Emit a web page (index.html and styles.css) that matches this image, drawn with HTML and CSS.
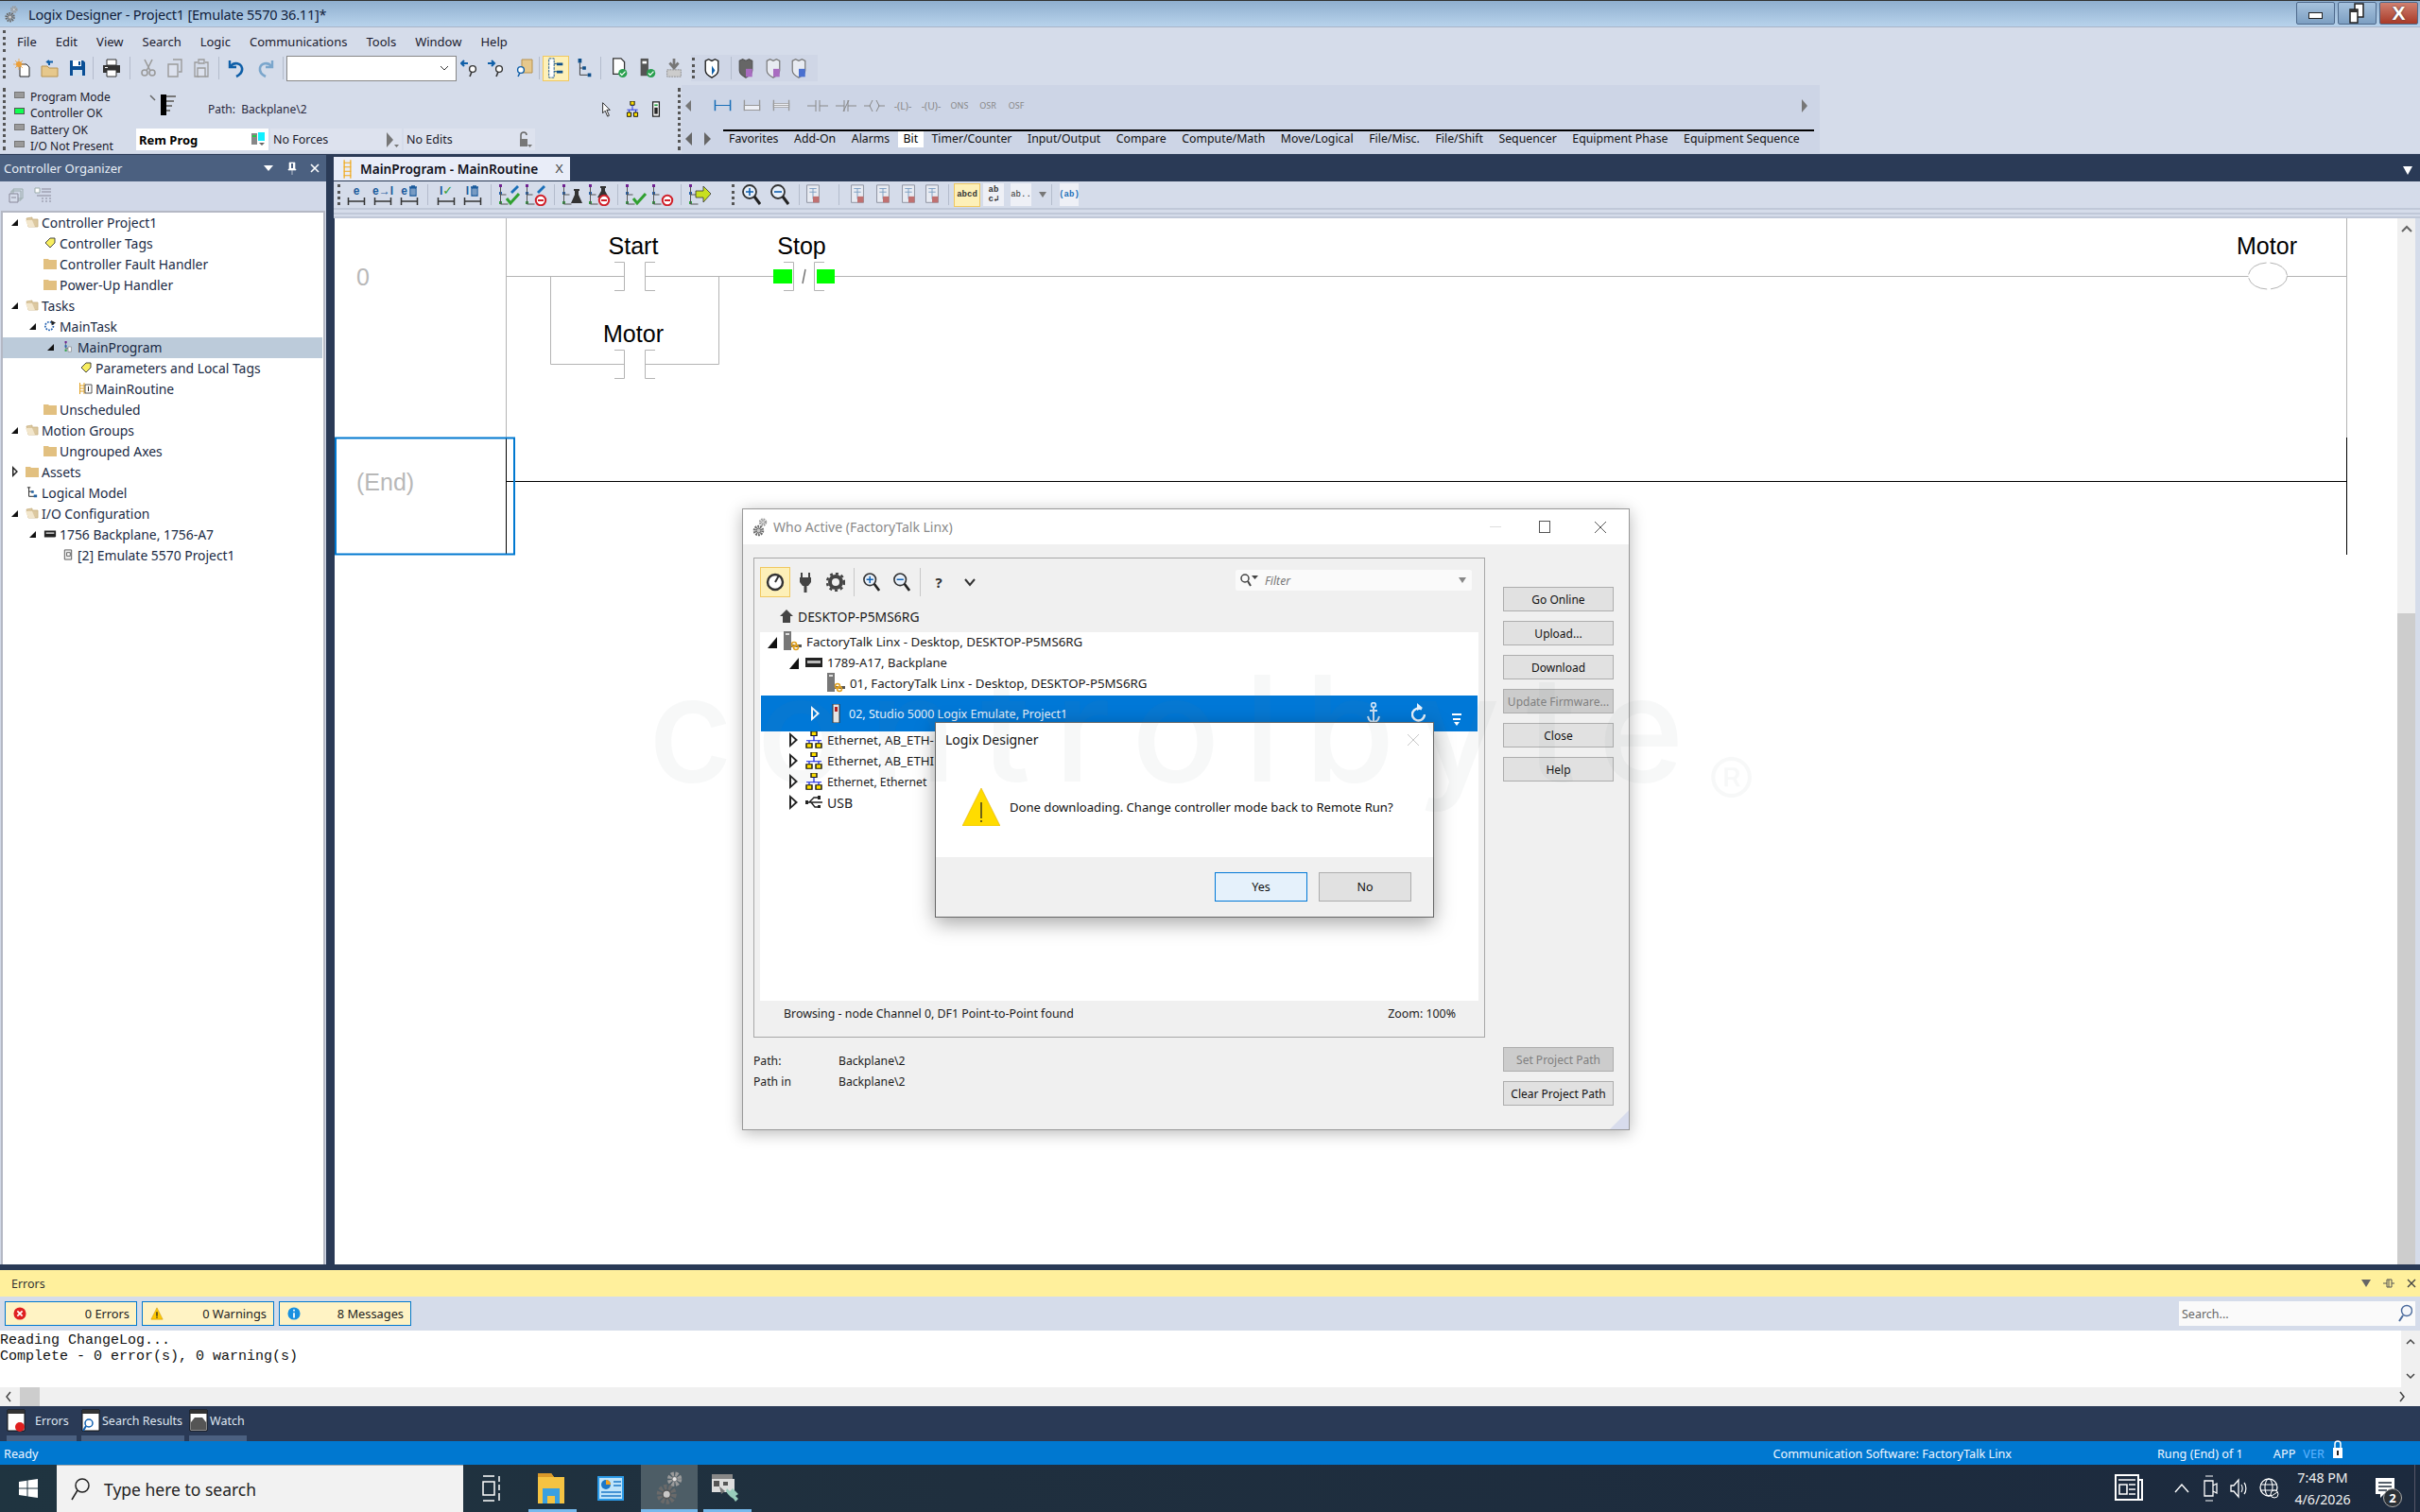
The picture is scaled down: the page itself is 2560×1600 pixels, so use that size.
FILE: index.html
```html
<!DOCTYPE html>
<html lang="en">
<head>
<meta charset="utf-8">
<title>Logix Designer - Project1</title>
<link rel="stylesheet" href="styles.css">
</head>
<body>
<svg class="defs" width="0" height="0" aria-hidden="true">
  <defs>
    <symbol id="gears" viewBox="0 0 20 26"><circle cx="8" cy="17.500" r="5.500" fill="none" stroke="#6a6a6a" stroke-width="4" stroke-dasharray="2.200 1.200"/><circle cx="8" cy="17.500" r="3" fill="#c8c8c8" stroke="#555"/><circle cx="14" cy="6" r="3.800" fill="none" stroke="#9a9a9a" stroke-width="3.400" stroke-dasharray="2 1"/><circle cx="14" cy="6" r="1.800" fill="#e4e4e4" stroke="#777" stroke-width=".6"/></symbol>
    <symbol id="new" viewBox="0 0 20 20"><path d="M7 6h7l3 3v10H7z" fill="#fff" stroke="#222"/><circle cx="6" cy="6" r="3" fill="#f0a030"/><path d="M6 0v12M0 6h12M2 2l8 8M10 2l-8 8" stroke="#e8a040" stroke-width=".8"/></symbol>
    <symbol id="open" viewBox="0 0 20 20"><path d="M1 8h6l2 2h9v9H1z" fill="#e6c88c" stroke="#b8924c"/><path d="M9 7V3.500h4M9 2l-2 1.500L9 5" fill="none" stroke="#0f5fa8" stroke-width="2"/></symbol>
    <symbol id="save" viewBox="0 0 20 20"><path d="M2 2h14l2 2v14H2z" fill="#0a4f96"/><path d="M5 2h9v6H5z" fill="#fff"/><path d="M11 3h2v4h-2z" fill="#0a4f96"/><path d="M5 12h10v6H5z" fill="#cfe0f0"/></symbol>
    <symbol id="print" viewBox="0 0 20 20"><path d="M5 1h10v6H5z" fill="#fff" stroke="#333"/><path d="M1 7h18v8H1z" fill="#333"/><path d="M5 12h10v7H5z" fill="#fff" stroke="#333"/><path d="M3 9h3v1H3z" fill="#fff"/></symbol>
    <symbol id="cut" viewBox="0 0 20 20"><path d="M6 1l6 12M14 1L8 13" stroke="#9a9a9a" stroke-width="1.600" fill="none"/><circle cx="6" cy="15" r="3" fill="none" stroke="#9a9a9a" stroke-width="1.600"/><circle cx="14" cy="15" r="3" fill="none" stroke="#9a9a9a" stroke-width="1.600"/></symbol>
    <symbol id="copy" viewBox="0 0 20 20"><path d="M8 1h9v13h-3" fill="none" stroke="#9a9a9a" stroke-width="1.400"/><path d="M3 6h10v13H3z" fill="#dde2ee" stroke="#9a9a9a" stroke-width="1.400"/></symbol>
    <symbol id="paste" viewBox="0 0 20 20"><path d="M6 4H3v15h5M14 4h3v15h-3" fill="none" stroke="#9a9a9a" stroke-width="1.300"/><path d="M7 1h6v4H7z" fill="none" stroke="#9a9a9a" stroke-width="1.300"/><path d="M6 10h8v9H6z" fill="#dde2ee" stroke="#9a9a9a" stroke-width="1.300"/></symbol>
    <symbol id="undo" viewBox="0 0 20 22"><path d="M3 3v7h7" fill="none" stroke="#0f5fa8" stroke-width="2.400"/><path d="M4 9c4-5 11-3 12 2 .7 4-2 7-6 9" fill="none" stroke="#0f5fa8" stroke-width="2.600"/></symbol>
    <symbol id="redo" viewBox="0 0 20 22"><path d="M17 3v7h-7" fill="none" stroke="#7ba6cc" stroke-width="2.400"/><path d="M16 9c-4-5-11-3-12 2-.7 4 2 7 6 9" fill="none" stroke="#7ba6cc" stroke-width="2.600"/></symbol>
    <symbol id="findb" viewBox="0 0 20 20"><path d="M8 5H2M4 2L1 5l3 3" fill="none" stroke="#0f5fa8" stroke-width="2"/><circle cx="13" cy="11" r="3.400" fill="#fff" stroke="#333" stroke-width="1.400"/><path d="M12 14l-2 5" stroke="#333" stroke-width="1.600"/></symbol>
    <symbol id="findf" viewBox="0 0 20 20"><path d="M1 5h6M5 2l3 3-3 3" fill="none" stroke="#0f5fa8" stroke-width="2"/><circle cx="13" cy="11" r="3.400" fill="#fff" stroke="#333" stroke-width="1.400"/><path d="M12 14l-2 5" stroke="#333" stroke-width="1.600"/></symbol>
    <symbol id="findd" viewBox="0 0 20 20"><path d="M7 1h11v14H7z" fill="#e6c88c" stroke="#b8924c"/><circle cx="6" cy="12" r="3.400" fill="#fff" stroke="#0f5fa8" stroke-width="1.400"/><path d="M5 15l-2 4" stroke="#0f5fa8" stroke-width="1.600"/></symbol>
    <symbol id="org1" viewBox="0 0 20 24"><path d="M2 1h6v22H2z" fill="#fff" stroke="#0f4f8a" stroke-dasharray="3 1"/><path d="M11 6h7v3h-7zM11 15h7v3h-7z" fill="#0f4f8a"/><path d="M8 7h3M8 16h3" stroke="#0f4f8a"/></symbol>
    <symbol id="org2" viewBox="0 0 20 24"><path d="M3 1h4v5H3zM8 10h4v4H8zM14 18h4v4h-4z" fill="#0f4f8a"/><path d="M5 6v14h9M5 12h3" fill="none" stroke="#333"/></symbol>
    <symbol id="doc" viewBox="0 0 20 24"><path d="M2 1h9l4 4v14H2z" fill="#fff" stroke="#333" stroke-width="1.400"/><circle cx="13" cy="18" r="5" fill="#2aa050"/><path d="M10 18l2 2 4-4" fill="none" stroke="#fff" stroke-width="1.400"/></symbol>
    <symbol id="modck" viewBox="0 0 20 24"><path d="M2 1h9v20H2z" fill="#555"/><path d="M4 4h5v3H4z" fill="#fff"/><circle cx="14" cy="18" r="5" fill="#2aa050"/><path d="M11 18l2 2 4-4" fill="none" stroke="#fff" stroke-width="1.400"/></symbol>
    <symbol id="dl" viewBox="0 0 20 24"><path d="M10 1v9M5 6l5 6 5-6" fill="none" stroke="#777" stroke-width="3"/><path d="M2 14h16v8H2z" fill="#ccc" stroke="#888" stroke-dasharray="2 1"/></symbol>
    <symbol id="shield" viewBox="0 0 20 26"><path d="M2 4l4-2 4 2 4-2 4 2v12c0 4-4 7-8 9-4-2-8-5-8-9z" fill="#fff" stroke="#222" stroke-width="1.600"/><path d="M10 10l4 6-4 6z" fill="#0f5fa8"/></symbol>
    <symbol id="shieldg" viewBox="0 0 20 26"><path d="M2 4l4-2 4 2 4-2 4 2v12c0 4-4 7-8 9-4-2-8-5-8-9z" fill="#666" stroke="#555" stroke-width="1.400"/><path d="M10 14h8v10h-8z" fill="#a86cc0"/></symbol>
    <symbol id="shieldp" viewBox="0 0 20 26"><path d="M2 4l4-2 4 2 4-2 4 2v12c0 4-4 7-8 9-4-2-8-5-8-9z" fill="#e8ebf2" stroke="#777" stroke-width="1.400"/><path d="M10 14h8v10h-8z" fill="#a86cc0"/></symbol>
    <symbol id="shieldb" viewBox="0 0 20 26"><path d="M2 4l4-2 4 2 4-2 4 2v12c0 4-4 7-8 9-4-2-8-5-8-9z" fill="#e8ebf2" stroke="#777" stroke-width="1.400"/><path d="M10 14h8v10h-8z" fill="#4a70d0"/></symbol>
    <symbol id="pointer" viewBox="0 0 14 20"><path d="M3 2l9 9H8l3 7-2 1-3-7-3 3z" fill="#fff" stroke="#111"/></symbol>
    <symbol id="net" viewBox="0 0 18 24"><path d="M6 0h6v6H6z" fill="#ffe000" stroke="#111" stroke-width="1.400"/><path d="M9 6v7M1 13h16M4 13v4M14 13v4" stroke="#1020e0" stroke-width="1.200" fill="none"/><path d="M1 17h6v6H1zM11 17h6v6h-6z" fill="#ffe000" stroke="#111" stroke-width="1.400"/></symbol>
    <symbol id="fo" viewBox="0 0 14 12"><path d="M1 2l6-1v2h6v8H3z" fill="#dcc8a0" stroke="#c8b080" stroke-width=".8"/><path d="M0 4h7l3 7H3z" fill="#f2e6cc"/></symbol>
    <symbol id="fc" viewBox="0 0 14 12"><path d="M0 1h5l1 1h8v10H0z" fill="#e2c080"/></symbol>
    <symbol id="tag" viewBox="0 0 12 12"><path d="M6 1h5v5l-5 5-5-5z" fill="#f8ee60" stroke="#333" stroke-width=".9"/></symbol>
    <symbol id="cycle" viewBox="0 0 16 14"><circle cx="7" cy="7" r="5" fill="none" stroke="#2060b0" stroke-width="2" stroke-dasharray="2 1.400"/><path d="M9 0l6 3-5 3z" fill="#222"/></symbol>
    <symbol id="prog" viewBox="0 0 10 14"><path d="M2 0v9h5" fill="none" stroke="#666"/><rect x="1" y="0" width="2.400" height="2.600" fill="#702090"/><rect x="1" y="5" width="2.400" height="2.600" fill="#2060b0"/><rect x="1" y="10" width="2.400" height="2.600" fill="#30a040"/><path d="M5 7h4v6H5z" fill="#fff" stroke="#777" stroke-width=".7"/></symbol>
    <symbol id="rout" viewBox="0 0 14 12"><path d="M.5 0v12M5 0v12" stroke="#e0a020" stroke-width="1"/><path d="M0 3h5M0 6h5M0 9h5" stroke="#e0a020"/><path d="M6 2h7v9H6z" fill="#fff" stroke="#444" stroke-width=".9"/><path d="M9.500 4v5" stroke="#222"/></symbol>
    <symbol id="logi" viewBox="0 0 14 14"><path d="M1 1h4M3 1v11h9M3 6h5" fill="none" stroke="#222" stroke-width="1.100"/><path d="M6 5h3v3H6zM9 10h4v3H9z" fill="#2060a0"/></symbol>
    <symbol id="bp" viewBox="0 0 16 10"><path d="M1 1h14v7l-1 1H1z" fill="#222"/><path d="M3 3h10v2H3z" fill="#bbb"/></symbol>
    <symbol id="emu" viewBox="0 0 10 13"><path d="M1 1h8v11H1z" fill="#eee" stroke="#555"/><path d="M3.500 4h4v4h-4z" fill="#fff" stroke="#333" stroke-width=".8"/></symbol>
    <symbol id="ladder" viewBox="0 0 12 26"><path d="M1.500 0v26M10.500 0v26" stroke="#f0a818" stroke-width="1.600"/><path d="M1 4h10M1 10h10M1 16h10M1 22h10" stroke="#f0a818" stroke-width="1.600"/></symbol>
    <symbol id="rung" viewBox="0 0 20 10"><path d="M1.500 1v8M18.500 1v8M1.500 5h17" stroke="#333" stroke-width="1.500" fill="none"/></symbol>
    <symbol id="trash" viewBox="0 0 10 12"><path d="M1 2h8M3 1h4M2 3h6v8H2z" fill="none" stroke="#1a5a9c" stroke-width="1.300"/><path d="M4 4v6M6 4v6" stroke="#1a5a9c"/></symbol>
    <g id="prg"><rect x="1" y="1" width="3" height="3" fill="#702090"/><rect x="1" y="9" width="3" height="3" fill="#2060b0"/><rect x="1" y="19" width="3" height="3" fill="#30a040"/><path d="M2.500 4v18h8M2.500 12h6" fill="none" stroke="#555"/></g>
    <g id="pen"><path d="M13 9l7-7 2 2-7 7z" fill="#1a6fb8"/></g>
    <g id="chk"><path d="M9 16l4 5 9-10" fill="none" stroke="#30a030" stroke-width="3"/></g>
    <g id="noc"><circle cx="17" cy="18" r="5.200" fill="#fff" stroke="#d0202a" stroke-width="2"/><path d="M14 18h6" stroke="#d0202a" stroke-width="2"/></g>
    <g id="fla"><path d="M13 3h6v2h-1v3l4 7H10l4-7V5h-1z" fill="#333"/></g>
    <symbol id="p1" viewBox="0 0 24 24"><use href="#prg"/><use href="#pen"/><use href="#chk"/></symbol>
    <symbol id="p2" viewBox="0 0 24 24"><use href="#prg"/><use href="#pen"/><use href="#noc"/></symbol>
    <symbol id="p3" viewBox="0 0 24 24"><use href="#prg"/><path d="M13 6h6v2h-1v4l4 9H10l4-9V8h-1z" fill="#333"/></symbol>
    <symbol id="p4" viewBox="0 0 24 24"><use href="#prg"/><use href="#fla"/><use href="#noc"/></symbol>
    <symbol id="p5" viewBox="0 0 24 24"><use href="#prg"/><use href="#chk"/></symbol>
    <symbol id="p6" viewBox="0 0 24 24"><use href="#prg"/><use href="#noc"/></symbol>
    <symbol id="p7" viewBox="0 0 24 24"><use href="#prg"/><path d="M8 8h8V3l8 8-8 9v-5H8z" fill="#c8e020" stroke="#333" stroke-width=".8"/></symbol>
    <symbol id="zin" viewBox="0 0 20 24"><circle cx="8" cy="9" r="7" fill="#e8f0fa" stroke="#333" stroke-width="1.800"/><path d="M13 14l6 8" stroke="#222" stroke-width="3"/><path d="M4 9h8M8 5v8" stroke="#1060b0" stroke-width="1.600"/></symbol>
    <symbol id="zout" viewBox="0 0 20 24"><circle cx="8" cy="9" r="7" fill="#e8f0fa" stroke="#333" stroke-width="1.800"/><path d="M13 14l6 8" stroke="#222" stroke-width="3"/><path d="M4 9h8" stroke="#1060b0" stroke-width="1.600"/></symbol>
    <symbol id="grayb" viewBox="0 0 20 26"><path d="M3 2h14v20H3z" fill="#e8ebf2" stroke="#8a8f9c"/><path d="M6 6h8M6 10h8M10 6v12" stroke="#7a9cc0"/><rect x="10" y="15" width="7" height="7" fill="#c07070"/></symbol>
    <symbol id="errx" viewBox="0 0 16 16"><circle cx="8" cy="8" r="7.500" fill="#e02020"/><path d="M5 5l6 6M11 5l-6 6" stroke="#fff" stroke-width="2"/></symbol>
    <symbol id="warn" viewBox="0 0 16 16"><path d="M8 1l7 14H1z" fill="#ffc800" stroke="#c89000" stroke-width=".6"/><path d="M8 6v5M8 12v1.500" stroke="#222" stroke-width="1.500"/></symbol>
    <symbol id="info" viewBox="0 0 16 16"><circle cx="8" cy="8" r="7.500" fill="#1890e0"/><path d="M8 3v2M8 7v6" stroke="#fff" stroke-width="2"/></symbol>
    <symbol id="wnd" viewBox="0 0 20 26"><path d="M1 1h18v22H1z" fill="#fff" stroke="#111"/><path d="M1 1h18v4H1z" fill="#333"/></symbol>
  </defs>
</svg>

<div class="app">
  <header class="titlebar">
    <svg class="ic app-ic"><use href="#gears"/></svg>
    <span class="title-text">Logix Designer - Project1 [Emulate 5570 36.11]*</span>
    <div class="winbtns">
      <span class="wb wb-min"><i class="wb-dash"></i></span>
      <span class="wb wb-res"><svg width="20" height="22" viewBox="0 0 20 22"><path d="M7 1h9v14H7z" fill="#fff" stroke="#222" stroke-width="1.500"/><path d="M2 7h8v14H2z" fill="#fff" stroke="#222" stroke-width="1.500"/><path d="M2 7h8v3H2z" fill="#333"/></svg></span>
      <span class="wb wb-close">X</span>
    </div>
  </header>

  <nav class="menubar">
    <i class="grip"></i>
    <span>File</span><span>Edit</span><span>View</span><span>Search</span><span>Logic</span><span>Communications</span><span>Tools</span><span>Window</span><span>Help</span>
  </nav>

  <div class="toolbar">
    <i class="grip"></i>
    <span class="t t29 first"><svg><use href="#new"/></svg></span>
    <span class="t t29"><svg><use href="#open"/></svg></span>
    <span class="t t29"><svg><use href="#save"/></svg></span>
    <i class="sep s1"></i>
    <span class="t t38"><svg><use href="#print"/></svg></span>
    <i class="sep"></i>
    <span class="t t28 cutgrp"><svg><use href="#cut"/></svg></span>
    <span class="t t28"><svg><use href="#copy"/></svg></span>
    <span class="t t28"><svg><use href="#paste"/></svg></span>
    <i class="sep s2"></i>
    <span class="t t31 undo"><svg><use href="#undo"/></svg></span>
    <span class="t t31"><svg><use href="#redo"/></svg></span>
    <i class="sep s3"></i>
    <div class="combo"><svg width="10" height="6" viewBox="0 0 10 6"><path d="M1 1l4 4 4-4" fill="none" stroke="#333"/></svg></div>
    <span class="t t28 findgrp"><svg><use href="#findb"/></svg></span>
    <span class="t t28"><svg><use href="#findf"/></svg></span>
    <span class="t t28 finde"><svg><use href="#findd"/></svg></span>
    <i class="sep s4"></i>
    <span class="t tact"><svg><use href="#org1"/></svg></span>
    <span class="t t29 after"><svg><use href="#org2"/></svg></span>
    <i class="sep s5"></i>
    <span class="t t29 docs"><svg><use href="#doc"/></svg></span>
    <span class="t t29"><svg><use href="#modck"/></svg></span>
    <span class="t t27"><svg><use href="#dl"/></svg></span>
    <div class="shields">
      <i class="grip"></i>
      <span class="t t26"><svg><use href="#shield"/></svg></span>
      <i class="sep"></i>
      <span class="t t30 shf"><svg><use href="#shieldg"/></svg></span>
      <span class="t t28"><svg><use href="#shieldp"/></svg></span>
      <span class="t t26"><svg><use href="#shieldb"/></svg></span>
    </div>
  </div>

  <div class="online">
    <div class="online-left">
      <i class="grip"></i>
      <ul class="leds">
        <li><i class="led"></i>Program Mode</li>
        <li><i class="led led-on"></i>Controller OK</li>
        <li><i class="led"></i>Battery OK</li>
        <li><i class="led"></i>I/O Not Present</li>
      </ul>
      <div class="online-mid">
        <div class="path-row">
          <svg class="lad-ic" width="30" height="24" viewBox="0 0 30 24"><path d="M1 1l5 5" stroke="#666" stroke-width="1.500"/><path d="M12 0h6v22h-6z" fill="#000"/><path d="M18 2h10M18 7h8M18 12h6M18 17h4" stroke="#777" stroke-width="2"/></svg>
          <span class="path">Path:&nbsp; Backplane\2</span>
          <svg class="pi pi1" viewBox="0 0 14 20"><use href="#pointer"/></svg>
          <svg class="pi pi2" viewBox="0 0 18 24"><use href="#net"/></svg>
          <svg class="pi pi3" viewBox="0 0 12 20"><path d="M2 1h8v18H2z" fill="#fff" stroke="#222" stroke-width="1.500"/><path d="M4 4h4v2H4z" fill="#22a040"/><path d="M4 8h4v8H4z" fill="#222"/></svg>
        </div>
        <div class="modes">
          <div class="mode mode-prog"><b>Rem Prog</b><svg width="15" height="15" viewBox="0 0 15 15"><path d="M0 1h6v12H0z" fill="#888"/><path d="M1 3h4v2H1z" fill="#2c4"/><path d="M7 0h7v9H7z" fill="#10f0ff"/><path d="M8 11h6l-3 3z" fill="#666"/></svg></div>
          <div class="mode">No Forces<svg width="14" height="18" viewBox="0 0 14 18"><path d="M1 1l7 8-7 8z" fill="#777"/><path d="M9 14h5l-2.500 3z" fill="#777"/></svg></div>
          <div class="mode">No Edits<svg width="14" height="18" viewBox="0 0 14 18"><path d="M2 8V4a3 3 0 0 1 6 0" fill="none" stroke="#666" stroke-width="1.500"/><path d="M1 8h8v8H1z" fill="#777"/><path d="M9 14h5l-2.500 3z" fill="#777"/></svg></div>
        </div>
      </div>
    </div>
    <div class="instr">
      <i class="grip"></i>
      <div class="instr-body">
        <div class="instr-top">
          <svg class="nav" width="6" height="12" viewBox="0 0 6 12"><path d="M6 0v12L0 6z" fill="#777"/></svg>
          <svg class="ir first-ir" viewBox="0 0 20 18" preserveAspectRatio="none"><path d="M1.500 1v16M18.500 1v16M1.500 9h17" stroke="#1a6fb8" stroke-width="1.600" fill="none"/></svg>
          <svg class="ir" viewBox="0 0 20 18" preserveAspectRatio="none"><path d="M1.500 1v16M18.500 1v16" stroke="#999" stroke-width="1.400"/><path d="M1.500 9h17v7h-17z" fill="#eef0f6" stroke="#999" stroke-width="1.200"/></svg>
          <svg class="ir" viewBox="0 0 20 18" preserveAspectRatio="none"><path d="M1.500 1v16M18.500 1v16" stroke="#999" stroke-width="1.400"/><path d="M1.500 6h17v6h-17z" fill="#eef0f6" stroke="#999" stroke-width="1.200"/><path d="M1.500 9h17" stroke="#999"/></svg>
          <svg class="ic2 g1" viewBox="0 0 22 14"><path d="M0 7h9M13 7h9M9 1v12M13 1v12" stroke="#888" fill="none"/></svg>
          <svg class="ic2" viewBox="0 0 22 14"><path d="M0 7h9M13 7h9M9 1v12M13 1v12M14 1L8 13" stroke="#888" fill="none"/></svg>
          <svg class="ic2" viewBox="0 0 22 14"><path d="M0 7h7M15 7h7" stroke="#888"/><path d="M9 1L6 7l3 6M13 1l3 6-3 6" stroke="#888" fill="none"/></svg>
          <span class="ilab il1">-(L)-</span><span class="ilab">-(U)-</span>
          <span class="ilab sm">ONS</span><span class="ilab sm">OSR</span><span class="ilab sm">OSF</span>
          <svg class="nav nav-r" width="6" height="14" viewBox="0 0 6 14"><path d="M0 0v14l6-7z" fill="#777"/></svg>
        </div>
        <div class="instr-tabs">
          <svg class="navs" width="7" height="14" viewBox="0 0 7 14"><path d="M7 0v14L0 7z" fill="#666"/></svg>
          <svg class="navs" width="7" height="14" viewBox="0 0 7 14"><path d="M0 0v14l7-7z" fill="#666"/></svg>
          <div class="tabstrip">
            <span>Favorites</span><span>Add-On</span><span>Alarms</span><span class="on">Bit</span><span>Timer/Counter</span><span>Input/Output</span><span>Compare</span><span>Compute/Math</span><span>Move/Logical</span><span>File/Misc.</span><span>File/Shift</span><span>Sequencer</span><span>Equipment Phase</span><span>Equipment Sequence</span>
          </div>
        </div>
      </div>
    </div>
  </div>

  <main class="main">
    <aside class="side">
      <div class="pane-head">
        <span>Controller Organizer</span>
        <span class="pane-ctl">
          <svg width="12" height="8" viewBox="0 0 12 8"><path d="M1 1h10L6 7z" fill="#fff"/></svg>
          <svg width="10" height="14" viewBox="0 0 10 14"><path d="M2 1h6v7h1v1H1V8h1zM5 9v5" fill="#fff" stroke="#fff" stroke-width=".6"/><path d="M4 2h2v5H4z" fill="#4a5f80"/></svg>
          <svg width="10" height="10" viewBox="0 0 10 10"><path d="M1 1l8 8M9 1l-8 8" stroke="#fff" stroke-width="1.600"/></svg>
        </span>
      </div>
      <div class="side-tools">
        <svg width="16" height="16" viewBox="0 0 16 16"><path d="M5 1h10v10H5z" fill="none" stroke="#9aa"/><path d="M3 3h10v10H3z" fill="none" stroke="#9aa"/><path d="M1 6h9v9H1z" fill="#d5dcea" stroke="#889"/><path d="M3 10h5" stroke="#889"/></svg>
        <svg width="19" height="17" viewBox="0 0 19 17"><path d="M1 1h5v5H1z" fill="#fff" stroke="#9aa"/><path d="M8 2h10M8 5h10M3 9h15M8 12h2M12 12h2M16 12h2M8 15h2M12 15h2M16 15h2" stroke="#889"/></svg>
      </div>
      <div class="tree">
        <div class="row"><i class="tw"></i><svg class="ti"><use href="#fo"/></svg>Controller Project1</div>
        <div class="row l1"><i class="tw none"></i><svg class="ti"><use href="#tag"/></svg>Controller Tags</div>
        <div class="row l1"><i class="tw none"></i><svg class="ti"><use href="#fc"/></svg>Controller Fault Handler</div>
        <div class="row l1"><i class="tw none"></i><svg class="ti"><use href="#fc"/></svg>Power-Up Handler</div>
        <div class="row"><i class="tw"></i><svg class="ti"><use href="#fo"/></svg>Tasks</div>
        <div class="row l1"><i class="tw"></i><svg class="ti"><use href="#cycle"/></svg>MainTask</div>
        <div class="row l2 sel"><i class="tw"></i><svg class="ti"><use href="#prog"/></svg>MainProgram</div>
        <div class="row l3"><i class="tw none"></i><svg class="ti"><use href="#tag"/></svg>Parameters and Local Tags</div>
        <div class="row l3"><i class="tw none"></i><svg class="ti"><use href="#rout"/></svg>MainRoutine</div>
        <div class="row l1"><i class="tw none"></i><svg class="ti"><use href="#fc"/></svg>Unscheduled</div>
        <div class="row"><i class="tw"></i><svg class="ti"><use href="#fo"/></svg>Motion Groups</div>
        <div class="row l1"><i class="tw none"></i><svg class="ti"><use href="#fc"/></svg>Ungrouped Axes</div>
        <div class="row"><i class="tw closed"></i><svg class="ti"><use href="#fc"/></svg>Assets</div>
        <div class="row"><i class="tw none"></i><svg class="ti"><use href="#logi"/></svg>Logical Model</div>
        <div class="row"><i class="tw"></i><svg class="ti"><use href="#fo"/></svg>I/O Configuration</div>
        <div class="row l1"><i class="tw"></i><svg class="ti"><use href="#bp"/></svg>1756 Backplane, 1756-A7</div>
        <div class="row l2"><i class="tw none"></i><svg class="ti"><use href="#emu"/></svg>[2] Emulate 5570 Project1</div>
      </div>
    </aside>

    <section class="editor">
      <div class="tabbar">
        <div class="doc-tab"><svg class="tab-lad"><use href="#ladder"/></svg><b>MainProgram - MainRoutine</b><span class="tab-x">X</span></div>
        <svg class="tab-menu" width="10" height="12" viewBox="0 0 10 12"><path d="M0 2h10L5 11z" fill="#fff"/></svg>
      </div>
      <div class="ed-tools">
        <i class="grip"></i>
        <span class="b28 b-first"><em>e</em><svg><use href="#rung"/></svg></span>
        <span class="b28"><em>e&#8594;I</em><svg><use href="#rung"/></svg></span>
        <span class="b28"><em class="emt">e<svg class="tr"><use href="#trash"/></svg></em><svg><use href="#rung"/></svg></span>
        <i class="sep"></i>
        <span class="b28"><em>I<s class="ok">&#10003;</s></em><svg><use href="#rung"/></svg></span>
        <span class="b28"><em class="emt">I<svg class="tr"><use href="#trash"/></svg></em><svg><use href="#rung"/></svg></span>
        <i class="sep"></i>
        <span class="p28"><svg><use href="#p1"/></svg></span>
        <span class="p28"><svg><use href="#p2"/></svg></span>
        <i class="sep"></i>
        <span class="p28"><svg><use href="#p3"/></svg></span>
        <span class="p28"><svg><use href="#p4"/></svg></span>
        <i class="sep"></i>
        <span class="p28"><svg><use href="#p5"/></svg></span>
        <span class="p28"><svg><use href="#p6"/></svg></span>
        <i class="sep"></i>
        <span class="p28"><svg><use href="#p7"/></svg></span>
        <i class="grip g2"></i>
        <span class="z30"><svg><use href="#zin"/></svg></span>
        <span class="z30"><svg><use href="#zout"/></svg></span>
        <i class="sep"></i>
        <span class="z28 solo"><svg><use href="#grayb"/></svg></span>
        <i class="sep"></i>
        <span class="z28"><svg><use href="#grayb"/></svg></span>
        <span class="z28"><svg><use href="#grayb"/></svg></span>
        <span class="z28"><svg><use href="#grayb"/></svg></span>
        <span class="z28 nar"><svg><use href="#grayb"/></svg></span>
        <i class="sep"></i>
        <span class="ab ab-on">abcd</span>
        <span class="ab">ab<br>c&#8626;</span>
        <span class="ab ab3">ab..</span>
        <svg class="abdrop" width="8" height="6" viewBox="0 0 8 6"><path d="M0 0h8L4 6z" fill="#777"/></svg>
        <i class="sep"></i>
        <span class="ab ab5">(ab)</span>
      </div>
      <div class="ed-lines"></div>
      <div class="ed-body">
        <svg class="rungs" viewBox="354 231 2182 1107" preserveAspectRatio="none">
          <g class="wire">
            <path d="M535.500 231v232M535.500 292.500H660M682 292.500H829M872 292.500H2378.500"/>
            <path d="M2419.500 292.500H2482M2482.500 231v232"/>
            <path d="M582.500 292.500v93H660M682 385.500h78.500v-93"/>
            <path d="M650 277.500h10.500v30H650M693 277.500h-10.500v30H693"/>
            <path d="M650 370.500h10.500v30H650M693 370.500h-10.500v30H693"/>
            <path d="M829 277.500h10.500v30H829M872 277.500h-10.500v30H872"/>
            <path d="M852 285l-3 15"/>
          </g>
          <rect class="pwr" x="818" y="285" width="20" height="15"/>
          <rect class="pwr" x="864" y="285" width="19" height="15"/>
          <ellipse class="coil" cx="2399" cy="292" rx="20.500" ry="14"/>
          <g class="end">
            <path d="M535.500 463v124M535.500 509.500H2482M2482.500 463v124"/>
            <rect class="endbox" x="355" y="463.500" width="189" height="123"/>
          </g>
          <text class="lbl" x="670" y="269">Start</text>
          <text class="lbl" x="848" y="269">Stop</text>
          <text class="lbl" x="670" y="362">Motor</text>
          <text class="lbl" x="2398" y="269">Motor</text>
          <text class="num" x="377" y="302">0</text>
          <text class="num" x="377" y="519">(End)</text>
        </svg>
        <div class="vscroll"><svg width="12" height="8" viewBox="0 0 12 8"><path d="M1 7l5-5 5 5" fill="none" stroke="#666" stroke-width="2"/></svg><i class="thumb"></i></div>
      </div>
    </section>
  </main>

  <section class="errors">
    <div class="err-head"><span>Errors</span>
      <span class="pane-ctl dark">
        <svg width="10" height="8" viewBox="0 0 10 8"><path d="M0 0h10L5 8z" fill="#666"/></svg>
        <svg width="12" height="12" viewBox="0 0 12 12"><path d="M0 6h4M4 2h5v8H4zM6 2v8M9 6h3" fill="none" stroke="#555"/></svg>
        <svg width="10" height="10" viewBox="0 0 10 10"><path d="M1 1l8 8M9 1l-8 8" stroke="#444" stroke-width="1.400"/></svg>
      </span>
    </div>
    <div class="err-filter">
      <div class="fbtn"><svg><use href="#errx"/></svg><span>0 Errors</span></div>
      <div class="fbtn"><svg><use href="#warn"/></svg><span>0 Warnings</span></div>
      <div class="fbtn"><svg><use href="#info"/></svg><span>8 Messages</span></div>
      <div class="err-search"><span>Search...</span><svg width="16" height="20" viewBox="0 0 16 20"><circle cx="10" cy="7" r="5.500" fill="#f4f6fa" stroke="#4a6a9c" stroke-width="1.400"/><path d="M6 12l-4 6" stroke="#4a6a9c" stroke-width="2"/></svg></div>
    </div>
    <div class="err-out">
      <pre class="err-text">Reading ChangeLog...
Complete - 0 error(s), 0 warning(s)</pre>
      <div class="err-vs">
        <svg width="10" height="7" viewBox="0 0 10 7"><path d="M1 6l4-4 4 4" fill="none" stroke="#444" stroke-width="1.500"/></svg>
        <svg width="10" height="7" viewBox="0 0 10 7"><path d="M1 1l4 4 4-4" fill="none" stroke="#444" stroke-width="1.500"/></svg>
      </div>
    </div>
    <div class="err-hs">
      <svg width="8" height="12" viewBox="0 0 8 12"><path d="M6 1L2 6l4 5" fill="none" stroke="#444" stroke-width="1.500"/></svg>
      <i class="h-thumb"></i>
      <svg class="h-r" width="8" height="12" viewBox="0 0 8 12"><path d="M2 1l4 5-4 5" fill="none" stroke="#444" stroke-width="1.500"/></svg>
    </div>
  </section>

  <div class="btabs">
    <div class="btab-row">
      <span class="btab b1"><svg class="bico" viewBox="0 0 20 26"><use href="#wnd"/><circle cx="14" cy="19" r="5" fill="#e02020"/></svg><span class="btxt">Errors</span></span>
      <span class="btab b2"><svg class="bico" viewBox="0 0 20 26"><use href="#wnd"/><circle cx="8" cy="15" r="4" fill="#fff" stroke="#1060b0" stroke-width="1.500"/><path d="M5 18l-3 5" stroke="#1060b0" stroke-width="2"/></svg>Search Results</span>
      <span class="btab b3"><svg class="bico" viewBox="0 0 20 26"><use href="#wnd"/><path d="M2 14l4-5h8l4 5v8H2z" fill="#555"/></svg>Watch</span>
    </div>
    <div class="btab-tails"><i class="t1"></i><i class="t2"></i><i class="t3"></i></div>
  </div>

  <footer class="status">
    <span class="st-ready">Ready</span>
    <span class="st-comm">Communication Software: FactoryTalk Linx</span>
    <span class="st-rung">Rung (End) of 1</span>
    <span class="st-app">APP</span>
    <span class="st-ver">VER</span>
    <svg class="st-lock" width="12" height="20" viewBox="0 0 12 20"><path d="M3 8V4a3 3 0 0 1 6 0v4" fill="none" stroke="#fff" stroke-width="1.500"/><path d="M1 8h10v11H1z" fill="#fff"/><path d="M5 11h2v5H5z" fill="#222"/></svg>
  </footer>

  <footer class="taskbar">
    <span class="start"><svg width="20" height="20" viewBox="0 0 20 20"><path d="M0 3l8.500-1.300v7.800H0zM9.500 1.500L20 0v9.500H9.500zM0 10.500h8.500v7.800L0 17zM9.500 10.500H20V20L9.500 18.500z" fill="#fff"/></svg></span>
    <div class="tsearch"><svg width="22" height="30" viewBox="0 0 22 30"><circle cx="13" cy="11" r="7" fill="none" stroke="#222" stroke-width="1.500"/><path d="M8 16l-6 10" stroke="#222" stroke-width="1.500"/></svg><span>Type here to search</span></div>
    <span class="tk tk1"><svg width="20" height="28" viewBox="0 0 20 28"><path d="M1 1h12M1 27h12M1 7h12v14H1zM18 1v6M18 10v6M18 19v8" fill="none" stroke="#fff" stroke-width="1.500"/></svg></span>
    <span class="tk run"><svg width="28" height="32" viewBox="0 0 28 32"><path d="M0 0h14l3 4h11v28H0z" fill="#f5c342"/><path d="M0 0h14l3 4H0z" fill="#d9992a"/><path d="M5 16h18v16h-5v-8h-8v8H5z" fill="#3aa0e0"/></svg></span>
    <span class="tk tk-out"><svg width="28" height="26" viewBox="0 0 28 26"><path d="M0 0h28v26H0z" fill="#2b9be8"/><path d="M2 2h24v22H2z" fill="#bfe4fa"/><circle cx="9" cy="9" r="5" fill="#1c78c8"/><path d="M9 9V4a5 5 0 0 1 5 5z" fill="#f0a020"/><path d="M17 6h8M17 10h8M4 17h21M4 21h21" stroke="#1c78c8" stroke-width="1.500"/></svg></span>
    <span class="tk tk-act"><svg width="28" height="38" viewBox="0 0 20 26"><use href="#gears"/></svg></span>
    <span class="tk tk-last run"><svg width="30" height="32" viewBox="0 0 30 32"><path d="M0 1h22v5H0z" fill="#888"/><path d="M0 6h24v14H0z" fill="#ddd"/><path d="M2 8h6v6H2zM12 9h5v4h-5z" fill="#555"/><path d="M16 16l3 3 3-3 3 3 3 3-3 2 3 3-3 3-2-3-3-2-3-3-2-3z" fill="#9cb"/><path d="M8 14l6 5-4 3z" fill="#777"/></svg></span>
    <div class="tray">
      <svg width="30" height="30" viewBox="0 0 30 30"><path d="M1 1h24v26H1z" fill="none" stroke="#fff" stroke-width="2"/><path d="M25 6h4v21H1" fill="none" stroke="#fff" stroke-width="2"/><path d="M4 6h18M5 11h8v10H5zM15 11h7M15 16h7M15 21h7" stroke="#fff" stroke-width="1.600" fill="none"/></svg>
      <svg class="tr-up" width="16" height="10" viewBox="0 0 16 10"><path d="M1 9l7-8 7 8" fill="none" stroke="#fff" stroke-width="1.400"/></svg>
      <svg class="tr-a" width="16" height="28" viewBox="0 0 16 28"><path d="M2 1h8M2 27h8" stroke="#fff" stroke-width="1.200"/><path d="M1 6h9v16H1zM10 11l4-2v10l-4-2" fill="none" stroke="#fff" stroke-width="1.300"/></svg>
      <svg class="tr-b" width="20" height="22" viewBox="0 0 20 22"><path d="M1 8h3l5-6v18l-5-6H1z" fill="none" stroke="#fff" stroke-width="1.300"/><path d="M12 7c1.500 2 1.500 6 0 8M15 5c2.500 3 2.500 9 0 12" fill="none" stroke="#fff" stroke-width="1.200"/></svg>
      <svg class="tr-c" width="22" height="24" viewBox="0 0 22 24"><circle cx="10" cy="11" r="9" fill="none" stroke="#fff" stroke-width="1.300"/><ellipse cx="10" cy="11" rx="4" ry="9" fill="none" stroke="#fff" stroke-width="1.100"/><path d="M1 8h18M1 14h18" stroke="#fff" stroke-width="1.100"/><circle cx="16" cy="18" r="4" fill="#1f2d3c" stroke="#fff"/><path d="M13 20l6-4" stroke="#fff"/></svg>
      <div class="clock"><span>7:48 PM</span><span>4/6/2026</span></div>
      <span class="notif"><svg width="22" height="24" viewBox="0 0 22 24"><path d="M1 1h20v17H10l-4 4v-4H1z" fill="#fff"/><path d="M4 6h14M4 10h14M4 14h9" stroke="#1f2d3c" stroke-width="1.300"/></svg><b class="badge">2</b></span>
    </div>
    <i class="tk-edge"></i>
  </footer>

  <div class="who">
    <div class="who-title">
      <svg class="who-ic"><use href="#gears"/></svg>
      <span class="who-name">Who Active (FactoryTalk Linx)</span>
      <span class="who-ctl">
        <i class="wc-min"></i><i class="wc-max"></i>
        <svg width="14" height="14" viewBox="0 0 14 14"><path d="M1 1l12 12M13 1L1 13" stroke="#555"/></svg>
      </span>
    </div>
    <div class="who-body">
      <div class="who-left">
        <div class="frame">
          <div class="w-tools">
            <span class="w-act"><svg width="20" height="24" viewBox="0 0 20 24"><circle cx="10" cy="12" r="8" fill="#fff" stroke="#333" stroke-width="2.400"/><path d="M10 12l4-7" stroke="#333" stroke-width="2"/></svg></span>
            <span class="wt"><svg width="12" height="22" viewBox="0 0 12 22"><path d="M2 1v5M10 1v5" stroke="#444" stroke-width="2"/><path d="M0 6h12v5l-3 4H3l-3-4z" fill="#444"/><path d="M6 15v7" stroke="#444" stroke-width="3"/></svg></span>
            <span class="wt"><svg width="20" height="20" viewBox="0 0 20 20"><circle cx="10" cy="10" r="6" fill="none" stroke="#444" stroke-width="4"/><circle cx="10" cy="10" r="9" fill="none" stroke="#444" stroke-width="2.500" stroke-dasharray="3 3"/></svg></span>
            <i class="w-sep"></i>
            <span class="wt"><svg width="18" height="22" viewBox="0 0 20 24"><use href="#zin"/></svg></span>
            <span class="wt"><svg width="18" height="22" viewBox="0 0 20 24"><use href="#zout"/></svg></span>
            <i class="w-sep"></i>
            <span class="wt wq">?</span>
            <span class="wt"><svg width="12" height="9" viewBox="0 0 12 9"><path d="M1 1l5 6 5-6" fill="none" stroke="#333" stroke-width="2"/></svg></span>
            <div class="w-filter">
              <svg width="22" height="14" viewBox="0 0 22 14"><circle cx="6" cy="5" r="4" fill="none" stroke="#444" stroke-width="1.500"/><path d="M9 8l3 5" stroke="#444" stroke-width="2"/><path d="M13 2h7l-3.500 4z" fill="#444"/></svg>
              <em>Filter</em>
              <svg class="wf-d" width="8" height="6" viewBox="0 0 8 6"><path d="M0 0h8L4 6z" fill="#888"/></svg>
            </div>
          </div>
          <div class="w-home"><svg width="14" height="14" viewBox="0 0 14 14"><path d="M7 0l7 7h-3v7H3V7H0z" fill="#444"/></svg><span>DESKTOP-P5MS6RG</span></div>
          <div class="w-tree">
            <div class="wr fs-a"><i class="wtw"></i><svg class="wi" width="22" height="22" viewBox="0 0 22 22"><path d="M1 0h8v20H1z" fill="#777"/><path d="M3 2h4v2H3z" fill="#ddd"/><path d="M9 14h11v3H9z" fill="#555"/><circle cx="12" cy="14" r="2.500" fill="none" stroke="#e0a020" stroke-width="1.500"/><circle cx="14" cy="17" r="2.500" fill="none" stroke="#e0a020" stroke-width="1.500"/></svg>FactoryTalk Linx - Desktop, DESKTOP-P5MS6RG</div>
            <div class="wr wl1 fs-b"><i class="wtw"></i><svg class="wi wi-bp" width="20" height="12" viewBox="0 0 20 12"><path d="M1 1h18v10H1z" fill="#222"/><path d="M3 4h14v3H3z" fill="#bbb"/></svg>1789-A17, Backplane</div>
            <div class="wr wl2 fs-a"><i class="wtw none"></i><svg class="wi" width="22" height="22" viewBox="0 0 22 22"><path d="M1 0h8v20H1z" fill="#777"/><path d="M3 2h4v2H3z" fill="#ddd"/><path d="M9 14h11v3H9z" fill="#555"/><circle cx="12" cy="14" r="2.500" fill="none" stroke="#e0a020" stroke-width="1.500"/><circle cx="14" cy="17" r="2.500" fill="none" stroke="#e0a020" stroke-width="1.500"/></svg>01, FactoryTalk Linx - Desktop, DESKTOP-P5MS6RG</div>
            <div class="wr wl2 wsel"><i class="wtw closed white"></i><svg class="wi wi-mod" width="9" height="20" viewBox="0 0 9 20"><path d="M1 0h7v20H1z" fill="#e4e4e4" stroke="#333"/><path d="M3 3h3v5H3z" fill="#b02020"/></svg>02, Studio 5000 Logix Emulate, Project1
              <span class="wsel-ic">
                <svg width="14" height="24" viewBox="0 0 14 24"><circle cx="7" cy="3" r="2.400" fill="none" stroke="#cfe4f8" stroke-width="1.600"/><path d="M7 5v16M3 9h8M1 15c1 5 4 6 6 6s5-1 6-6" fill="none" stroke="#cfe4f8" stroke-width="2"/></svg>
                <svg width="15" height="26" viewBox="0 0 15 26"><path d="M11 8.500A6.500 6.500 0 1 0 14 14" fill="none" stroke="#e8f2fc" stroke-width="2.400"/><path d="M6 2l6 5-6 3z" fill="#e8f2fc"/></svg>
                <svg class="wsel-f" width="10" height="14" viewBox="0 0 10 14"><path d="M0 0h10v2H0zM1 5h8v2H1z" fill="#fff"/><path d="M2 9h6l-3 4z" fill="#fff"/></svg>
              </span>
            </div>
            <div class="wr wl1 wafter fs-a"><i class="wtw closed"></i><svg class="wi wi-net" width="18" height="18" viewBox="0 0 18 24" preserveAspectRatio="none"><use href="#net"/></svg>Ethernet, AB_ETH-1, Ethernet</div>
            <div class="wr wl1 fs-a"><i class="wtw closed"></i><svg class="wi wi-net" width="18" height="18" viewBox="0 0 18 24" preserveAspectRatio="none"><use href="#net"/></svg>Ethernet, AB_ETHIP-1, Ethernet</div>
            <div class="wr wl1"><i class="wtw closed"></i><svg class="wi wi-net" width="18" height="18" viewBox="0 0 18 24" preserveAspectRatio="none"><use href="#net"/></svg>Ethernet, Ethernet</div>
            <div class="wr wl1 fs-d"><i class="wtw closed"></i><svg class="wi wi-net" width="18" height="14" viewBox="0 0 18 14"><path d="M0 7h18M4 7l5-5h4M6 7l4 5h3" fill="none" stroke="#222" stroke-width="1.400"/><path d="M13 0h3v4h-3zM13 10h3v3h-3zM0 5h3v4H0z" fill="#222"/></svg>USB</div>
          </div>
          <div class="w-status"><span>Browsing - node Channel 0, DF1 Point-to-Point found</span><span>Zoom: 100%</span></div>
        </div>
        <div class="w-path"><span>Path:</span><span>Backplane\2</span></div>
        <div class="w-path"><span>Path in</span><span>Backplane\2</span></div>
      </div>
      <div class="who-btns">
        <button class="wbtn">Go Online</button>
        <button class="wbtn">Upload...</button>
        <button class="wbtn">Download</button>
        <button class="wbtn dis">Update Firmware...</button>
        <button class="wbtn">Close</button>
        <button class="wbtn">Help</button>
        <button class="wbtn dis push">Set Project Path</button>
        <button class="wbtn">Clear Project Path</button>
      </div>
    </div>
    <i class="who-grip"></i>
  </div>

  <div class="msg">
    <div class="msg-main">
      <div class="msg-title"><span>Logix Designer</span><svg width="14" height="14" viewBox="0 0 14 14"><path d="M1 1l12 12M13 1L1 13" stroke="#c8c8c8"/></svg></div>
      <div class="msg-content">
        <svg width="40" height="40" viewBox="0 0 40 40"><path d="M20 0l20 40H0z" fill="#ffdc00" stroke="#e0b000" stroke-width=".6"/><path d="M20 15v17M20 34v2" stroke="#222" stroke-width="1.300"/></svg>
        <span>Done downloading. Change controller mode back to Remote Run?</span>
      </div>
    </div>
    <div class="msg-foot">
      <button class="mb mb-yes">Yes</button>
      <button class="mb">No</button>
    </div>
  </div>

  <div class="wmark" aria-hidden="true">controlbyte<sup>&#174;</sup></div>
</div>
</body>
</html>
```
FILE: styles.css
```css
* { box-sizing: border-box; }
html, body { margin: 0; padding: 0; }
body { font-family: "Noto Sans", sans-serif; font-size: 13px; color: #1a1a2a; }
i, em, s { font-style: normal; text-decoration: none; }
svg { display: block; flex: none; }
.defs { position: absolute; }
.app { position: relative; width: 2560px; height: 1600px; overflow: hidden; display: flex; flex-direction: column; background: #d5dcea; }

/* title bar */
.titlebar { height: 29px; flex: none; display: flex; align-items: center; padding-left: 5px; border-top: 1px solid #333; border-bottom: 1px solid #a8b4c8; background: linear-gradient(#8fafcf, #b8d3ec); }
.app-ic { width: 14px; height: 20px; }
.title-text { margin-left: 11px; font-size: 14.500px; color: #10203a; letter-spacing: -.2px; }
.winbtns { margin-left: auto; display: flex; gap: 3px; padding-right: 2px; align-self: flex-start; margin-top: 1px; }
.wb { width: 41px; height: 24px; border: 1px solid #4f6a8c; border-radius: 2px; display: flex; align-items: center; justify-content: center; background: linear-gradient(#a6c2dd, #7d9fc2); }
.wb-dash { width: 15px; height: 7px; margin-top: 5px; background: #fff; border: 1px solid #222; }
.wb-close { background: linear-gradient(#d08070, #a83a28); color: #fff; font: bold 21px "Liberation Sans", sans-serif; text-shadow: 0 0 2px #333; }
.wb-res svg { width: 20px; height: 22px; }

/* generic */
.grip { display: block; flex: none; width: 4px; border-left: 3px dotted #555; align-self: stretch; margin: 3px 0; }

/* menu */
.menubar { height: 29px; flex: none; display: flex; align-items: center; padding-left: 3px; gap: 20px; font-size: 13px; color: #1a1a2e; }
.menubar .grip { margin-right: -9px; }

/* toolbar */
.toolbar { height: 32px; flex: none; display: flex; align-items: center; padding: 0 0 4px 3px; }
.t { display: flex; align-items: center; justify-content: center; height: 26px; flex: none; }
.t svg { width: 20px; height: 22px; }
.first { margin-left: 2px; }
.t29 { width: 29px; } .t38 { width: 38px; } .t28 { width: 28px; } .t31 { width: 31px; } .t27 { width: 27px; } .t26 { width: 26px; } .t30 { width: 30px; }
.sep { display: block; flex: none; width: 1px; height: 24px; background: #b4bccc; }
.s1 { margin-left: 2px; }
.cutgrp { margin-left: 5px; } .s2 { margin-left: 4px; }
.undo { margin-left: 2px; } .s3 { margin-left: 3px; }
.combo { width: 180px; height: 27px; margin-left: 3px; background: #fff; border: 1px solid #888; display: flex; align-items: center; justify-content: flex-end; padding-right: 7px; }
.findgrp { margin-left: 0; } .finde { margin-left: 2px; }
.s4 { margin-left: 1px; }
.tact { width: 28px; height: 27px; margin-left: 3px; background: #fdf0b8; border: 1px solid #f0c860; }
.after { margin-left: 1px; }
.s5 { margin-left: 3px; }
.docs { margin-left: 5px; }
.shields { display: flex; align-items: center; height: 28px; background: #cfd6e6; margin-left: 5px; padding-right: 2px; width: 134px; }
.shields .grip { margin: 3px 4px 3px 1px; }
.shf { margin-left: 0; }
.shields .sep { margin-left: 7px; }

/* online */
.online { height: 73px; flex: none; display: flex; border-bottom: 1px solid #c8d0e0; }
.online-left { width: 714px; display: flex; padding-left: 3px; flex: none; }
.leds { list-style: none; margin: 0; padding: 4px 0 0 8px; width: 140px; font-size: 12px; line-height: 17.300px; flex: none; }
.leds li { display: flex; align-items: center; gap: 6px; white-space: nowrap; }
.led { display: block; width: 11px; height: 7px; background: #9a9a9a; border: 1px solid #777; margin-top: -5px; }
.led-on { background: #10ff50; border-color: #555; }
.online-mid { display: flex; flex-direction: column; flex: 1; }
.path-row { height: 46px; display: flex; align-items: center; padding-left: 11px; }
.lad-ic { margin-top: -3px; }
.path { margin-left: 32px; margin-top: 5px; font-size: 12px; color: #2a2a40; }
.pi { height: 17px; margin-top: 5px; }
.pi1 { width: 14px; margin-left: 309px; } .pi2 { width: 16px; margin-left: 13px; } .pi3 { width: 12px; margin-left: 11px; }
.modes { display: flex; gap: 2px; height: 23px; margin-left: -3px; }
.mode { width: 139px; background: #dde2ee; display: flex; align-items: center; justify-content: space-between; padding: 0 3px; font-size: 12.500px; }
.mode-prog { width: 140px; background: #fff; }
.mode-prog b { font-size: 13px; color: #000; }

.instr { width: 1211px; display: flex; padding-left: 3px; flex: none; }
.instr .grip { margin: 3px 0; }
.instr-body { flex: 1; background: #cdd5e6; display: flex; flex-direction: column; }
.instr-top { height: 48px; display: flex; align-items: center; padding: 0 0 4px 4px; }
.ir { width: 19px; height: 13px; margin-right: 12px; }
.first-ir { margin-left: 24px; }
.ic2 { width: 22px; height: 14px; margin-right: 8px; }
.g1 { margin-left: 6px; }
.ilab { color: #888; font-size: 10.500px; width: 30px; text-align: center; }
.il1 { margin-left: -4px; }
.ilab.sm { font-size: 9px; }
.nav-r { margin-left: auto; margin-right: 13px; }
.instr-tabs { height: 25px; display: flex; align-items: flex-start; padding-left: 4px; gap: 13px; }
.navs { margin-top: 3px; }
.tabstrip { display: flex; border-top: 2px solid #000; height: 19px; width: 1154px; font-size: 12.300px; line-height: 16px; color: #111; }
.tabstrip span { padding: 0 8.300px; white-space: nowrap; }
.tabstrip span:first-child { padding-left: 6px; }
.tabstrip .on { background: #fff; color: #000; padding: 0 6px; }

/* main */
.main { flex: 1; min-height: 0; display: flex; background: #2a3a56; padding-top: 1px; }
.side { width: 345px; flex: none; display: flex; flex-direction: column; background: #d1d8e8; }
.pane-head { height: 28px; background: #4b6080; display: flex; align-items: center; justify-content: space-between; padding: 0 7px 0 4px; font-size: 13px; color: #e8eef6; }
.pane-ctl { display: flex; align-items: center; gap: 14px; }
.side-tools { height: 29px; display: flex; align-items: center; gap: 11px; padding-left: 9px; }
.tree { flex: 1; background: #fff; border: 2px solid #b4b8c4; border-bottom: 0; margin: 2px 1px 0 1px; font-size: 13.900px; color: #1a2a44; }
.row { height: 22px; display: flex; align-items: center; padding: 0 0 2px 9px; white-space: nowrap; }
.l1 { padding-left: 28px; } .l2 { padding-left: 47px; } .l3 { padding-left: 66px; }
.sel { background: #bccbda; margin: 0 1px 0 0; }
.tw { display: block; flex: none; width: 15px; height: 8px; background: #111; clip-path: polygon(0 8px, 7px 8px, 7px 1px); }
.tw.none { background: transparent; }
.tw.closed { height: 12px; background: #222; clip-path: polygon(evenodd, 1px 0, 7px 6px, 1px 12px, 1px 0, 2.500px 3.500px, 2.500px 8.500px, 5px 6px, 2.500px 3.500px, 1px 0); }
.ti { width: 14px; height: 12px; margin-right: 3px; }

/* editor */
.editor { flex: 1; min-width: 0; display: flex; flex-direction: column; margin-left: 8px; }
.tabbar { height: 28px; flex: none; display: flex; align-items: flex-end; justify-content: space-between; padding: 2px 8px 1px 0; }
.doc-tab { width: 250px; height: 25px; background: #e9edf8; display: flex; align-items: center; padding-left: 10px; }
.tab-lad { width: 9px; height: 20px; }
.doc-tab b { margin-left: 9px; font-size: 13.700px; font-weight: 600; color: #10101a; white-space: nowrap; }
.tab-x { margin-left: 18px; color: #444; font: 13px "Liberation Sans", sans-serif; }
.tab-menu { margin-bottom: 5px; }
.ed-tools { height: 28px; flex: none; display: flex; align-items: center; padding-left: 4px; background: #d5dcea; }
.ed-tools .sep { height: 22px; margin: 0 5px; background: #b4bccc; }
.b28 { width: 28px; display: flex; flex-direction: column; align-items: center; height: 24px; justify-content: flex-end; }
.b-first { margin-left: 2px; }
.b28 em { font: bold 12px/12px "Liberation Sans", sans-serif; color: #1a5a9c; white-space: nowrap; }
.emt { display: flex; align-items: center; gap: 1px; }
.b28 svg { width: 20px; height: 10px; }
.b28 svg.tr { width: 10px; height: 12px; }
.ok { color: #30a030; font: bold 13px/12px "DejaVu Sans", sans-serif; }
.p28 { width: 28px; height: 24px; display: flex; align-items: center; justify-content: center; }
.p28 svg { width: 24px; height: 24px; }
.grip.g2 { margin: 3px 2px 3px 20px; }
.z30 { width: 30px; display: flex; justify-content: center; }
.z30 svg { width: 20px; height: 24px; }
.z28 { width: 27px; display: flex; justify-content: center; }
.z28.solo { width: 28px; margin: 0 8px 0 -5px; }
.z28.nar { width: 24px; }
.z28 svg { width: 20px; height: 24px; }
.ab { width: 22px; height: 24px; margin-right: 3px; background: #eef0f6; font: bold 9px/10px "Liberation Mono", monospace; color: #333; display: flex; align-items: center; justify-content: center; text-align: center; }
.ab-on { width: 28px; height: 25px; background: #fdf0b8; border: 1px solid #f0c860; }
.ab3 { margin-left: 4px; font-weight: normal; }
.abdrop { margin: 0 0 0 5px; }
.ab5 { color: #1a6fb8; margin: 0 0 0 3px; width: 20px; }
.ed-lines { height: 11px; flex: none; border-top: 2px solid #c0c8d8; box-shadow: inset 0 3px 0 #d5dcea, inset 0 5px 0 #c0c8d8; border-bottom: 2px solid #c0c8d8; background: #d5dcea; }
.ed-body { flex: 1; min-height: 0; display: flex; margin-left: 1px; padding-right: 4px; background: #d5dcea; }
.rungs { width: 2182px; height: 100%; background: #fff; flex: none; }
.wire path { fill: none; stroke: #b4b4b4; stroke-width: 1; }
.wire path:last-child { stroke: #777; stroke-width: 1.500; }
.pwr { fill: #00ff00; }
.coil { fill: none; stroke: #b4b4b4; stroke-width: 1; stroke-dasharray: 24 4; }
.end path { fill: none; stroke: #000; stroke-width: 1; }
.endbox { fill: none; stroke: #0078d0; stroke-width: 2; }
.lbl { font: 25px "Liberation Sans", sans-serif; fill: #000; text-anchor: middle; }
.num { font: 25px "Liberation Sans", sans-serif; fill: #b8b8b8; }
.vscroll { width: 19px; flex: none; background: #f0f0f0; display: flex; flex-direction: column; align-items: center; padding-top: 7px; }
.thumb { display: block; width: 100%; margin-top: auto; height: 689px; background: #cdcdcd; }

/* errors */
.errors { flex: none; display: flex; flex-direction: column; border-top: 6px solid #2a3a56; }
.err-head { height: 28px; background: #fff09c; display: flex; align-items: center; justify-content: space-between; padding: 0 4px 0 12px; font-size: 12.500px; color: #333; }
.pane-ctl.dark { gap: 13px; }
.err-filter { height: 36px; background: #d5dcea; display: flex; align-items: center; gap: 5px; padding-left: 5px; }
.fbtn { width: 140px; height: 26px; background: #fff3c4; border: 1px solid #0078d0; display: flex; align-items: center; justify-content: space-between; padding: 0 7px 0 8px; font-size: 12.800px; color: #222; }
.fbtn svg { width: 14px; height: 16px; }
.err-search { margin-left: auto; margin-right: 5px; width: 250px; height: 26px; background: #fafafa; display: flex; align-items: center; justify-content: space-between; padding: 0 3px; color: #666; font-size: 12.500px; }
.err-out { height: 60px; background: #fff; display: flex; justify-content: space-between; }
.err-text { margin: 0; font: 15px/17px "Liberation Mono", monospace; color: #111; padding-top: 2px; }
.err-vs { width: 20px; background: #f0f0f0; display: flex; flex-direction: column; align-items: center; justify-content: space-between; padding: 8px 0; }
.err-hs { height: 20px; background: #f0f0f0; display: flex; align-items: center; padding: 0 15px 0 5px; }
.h-thumb { display: block; width: 21px; height: 20px; margin-left: 8px; background: #cdcdcd; }
.h-r { margin-left: auto; }

/* bottom tabs */
.btabs { height: 37px; flex: none; background: #2a3a56; }
.btab-row { height: 31px; display: flex; align-items: center; color: #dfe6f0; font-size: 12.500px; padding-left: 7px; }
.btab { display: flex; align-items: center; gap: 2px; white-space: nowrap; }
.bico { width: 20px; height: 26px; }
.btxt { margin-left: 8px; }
.b1 { width: 79px; } .b2 { width: 114px; }
.btab-tails { display: flex; height: 6px; padding-left: 7px; gap: 5px; }
.btab-tails i { display: block; background: #4b6080; }
.t1 { width: 74px; } .t2 { width: 109px; } .t3 { width: 61px; }

/* status */
.status { height: 25px; flex: none; background: #0078d0; color: #f0f6ff; font-size: 12.700px; display: flex; align-items: center; padding-left: 4px; white-space: nowrap; }
.st-comm { margin-left: 1835px; }
.st-rung { margin-left: 154px; }
.st-app { margin-left: 32px; }
.st-ver { margin-left: 8px; color: #5fb4ff; }
.st-lock { margin: -8px 0 0 8px; }

/* taskbar */
.taskbar { height: 50px; flex: none; background: linear-gradient(90deg, #1f3440, #1f2f3e 40%, #1c2a3e); display: flex; align-items: center; position: relative; color: #fff; }
.start { width: 60px; display: flex; justify-content: center; }
.tsearch { width: 430px; height: 50px; background: #f2f2f2; border-top: 1px solid #aaa; display: flex; align-items: center; padding-left: 14px; gap: 14px; color: #222; font-size: 17.500px; }
.tk { width: 60px; height: 50px; display: flex; align-items: center; justify-content: center; flex: none; position: relative; }
.tk1 { margin-right: 3px; }
.tk-out { width: 65px; }
.tk.run::after { content: ""; position: absolute; left: 6px; right: 3px; bottom: 0; height: 3px; background: #76b9ed; }
.tk-act { background: #4d5d66; }
.tk-act::after { content: ""; position: absolute; left: 0; right: 0; bottom: 0; height: 3px; background: #76b9ed; }
.tray { margin-left: auto; display: flex; align-items: center; padding-right: 26px; }
.tr-up { margin-left: 33px; } .tr-a { margin-left: 15px; } .tr-b { margin-left: 12px; } .tr-c { margin-left: 11px; }
.clock { width: 72px; margin-left: 9px; display: flex; flex-direction: column; align-items: center; gap: 4px; font-size: 14.200px; line-height: 19px; color: #f0f0f0; }
.notif { position: relative; margin-left: 19px; }
.badge { position: absolute; left: 9px; top: 12px; width: 20px; height: 20px; border-radius: 50%; background: #2a3036; border: 1px solid #aaa; font-size: 13px; line-height: 18px; text-align: center; }
.tk-edge { position: absolute; right: 5px; top: 0; bottom: 0; width: 1px; background: #556; }

/* who active window */
.who { position: absolute; left: 785px; top: 538px; width: 939px; height: 658px; background: #f0f0f0; border: 1px solid #999; box-shadow: 0 3px 16px rgba(0,0,0,.28); font-size: 12.200px; color: #1a1a1a; }
.who-title { height: 37px; background: #fff; display: flex; align-items: center; padding-left: 10px; }
.who-ic { width: 16px; height: 20px; }
.who-name { margin-left: 6px; color: #8a8a8a; font-size: 14px; }
.who-ctl { margin-left: auto; display: flex; align-items: center; padding-right: 23px; }
.wc-min { display: block; width: 12px; height: 1px; background: #ddd; margin-right: 40px; }
.wc-max { display: block; width: 12px; height: 13px; border: 1px solid #555; margin-right: 46px; }
.who-body { display: grid; grid-template-columns: 774px 117px; column-gap: 19px; padding: 14px 0 0 11px; height: 620px; }
.frame { height: 508px; border: 1px solid #a8a8a8; display: flex; flex-direction: column; padding: 0 6px; }
.w-tools { height: 50px; flex: none; display: flex; align-items: flex-start; padding-top: 9px; position: relative; }
.w-act { width: 32px; height: 32px; background: #fdf0b8; border: 1px solid #f0c860; display: flex; align-items: center; justify-content: center; }
.wt { width: 32px; height: 32px; display: flex; align-items: center; justify-content: center; }
.w-sep { display: block; width: 1px; height: 30px; background: #c8c8c8; margin: 1px 2px 0 3px; }
.wq { font-weight: bold; font-size: 15px; color: #333; width: 34px; }
.w-filter { position: absolute; left: 503px; top: 12px; width: 250px; height: 22px; background: #fafafa; border-radius: 2px; display: flex; align-items: center; padding-left: 4px; gap: 5px; color: #777; }
.w-filter em { font-style: italic; }
.wf-d { margin-left: auto; margin-right: 6px; }
.w-home { height: 22px; flex: none; display: flex; align-items: center; padding-left: 21px; gap: 5px; font-size: 13.900px; }
.w-tree { height: 390px; flex: none; background: #fff; margin-top: 6px; }
.wr { height: 22px; display: flex; align-items: center; padding-left: 8px; white-space: nowrap; position: relative; }
.wr:first-child { margin-top: -1px; }
.fs-a { font-size: 13.300px; } .fs-b { font-size: 13px; } .fs-d { font-size: 14px; }
.wl1 { padding-left: 31px; } .wl2 { padding-left: 54px; }
.wtw { display: block; flex: none; width: 15px; height: 14px; background: #111; clip-path: polygon(0 14px, 10px 14px, 10px 2px); }
.wtw.none { background: transparent; }
.wtw.closed { background: #222; height: 16px; clip-path: polygon(evenodd, 0 0, 9px 8px, 0 16px, 0 0, 2px 4px, 2px 12px, 6px 8px, 2px 4px, 0 0); }
.wtw.white { background: #fff; }
.wi { margin-right: 3px; flex: none; margin-left: 1px; }
.wi-mod { margin-left: 7px; margin-right: 9px; }
.wi-net { margin-left: 2px; margin-right: 5px; }
.wi-bp { margin-right: 4px; }
.wsel { height: 38px; margin: 2px 1px -2px 1px; background: #0078d7; color: #e8f2fc; padding-left: 53px; font-size: 12.500px; }
.wsel-ic { position: absolute; right: 0; top: 0; height: 38px; display: flex; align-items: center; }
.wsel-ic svg:first-child { margin-right: 33px; }
.wsel-ic svg:nth-child(2) { margin-right: 28px; }
.wsel-f { margin-top: 14px; margin-right: 17px; }
.w-status { flex: 1; display: flex; justify-content: space-between; align-items: center; padding: 0 24px 12px 25px; font-size: 12.400px; }
.frame + .w-path { margin-top: 13px; }
.w-path { display: flex; height: 22px; align-items: center; }
.w-path span:first-child { width: 90px; }
.who-btns { display: flex; flex-direction: column; gap: 10px; padding-top: 31px; height: 580px; }
.wbtn { height: 26px; background: #e1e1e1; border: 1px solid #adadad; font: 12px "Noto Sans", sans-serif; color: #111; padding: 0; white-space: nowrap; }
.wbtn.dis { background: #ccc; color: #808080; }
.wbtn.push { margin-top: auto; }
.who-grip { position: absolute; right: 0; bottom: 0; width: 20px; height: 20px; background: #d8dcec; clip-path: polygon(100% 0, 100% 100%, 0 100%); }

/* message box */
.msg { position: absolute; left: 989px; top: 764px; width: 528px; height: 207px; background: #f0f0f0; border: 1px solid #666; box-shadow: 0 6px 20px rgba(0,0,0,.35); display: flex; flex-direction: column; color: #111; }
.msg-main { height: 142px; background: #fff; flex: none; padding: 0 14px 0 10px; }
.msg-title { height: 35px; display: flex; align-items: center; justify-content: space-between; font-size: 14px; }
.msg-content { display: flex; align-items: center; gap: 10px; margin-top: 34px; padding-left: 18px; font-size: 13.100px; white-space: nowrap; }
.msg-foot { flex: 1; display: flex; justify-content: flex-end; gap: 12px; padding: 16px 23px 0 0; }
.mb { width: 98px; height: 31px; background: #e1e1e1; border: 1px solid #adadad; font: 12.500px "Noto Sans", sans-serif; color: #111; padding: 0; }
.mb-yes { background: #e5f1fb; border-color: #0078d7; }

/* watermark */
.wmark { position: absolute; left: 686px; top: 670px; font: 500 155px/1.300 Inter, sans-serif; letter-spacing: 25px; color: rgba(110,120,130,.055); pointer-events: none; white-space: nowrap; }
.wmark sup { font-size: 75px; font-weight: 300; letter-spacing: 0; vertical-align: -30px; line-height: 0; }
```
